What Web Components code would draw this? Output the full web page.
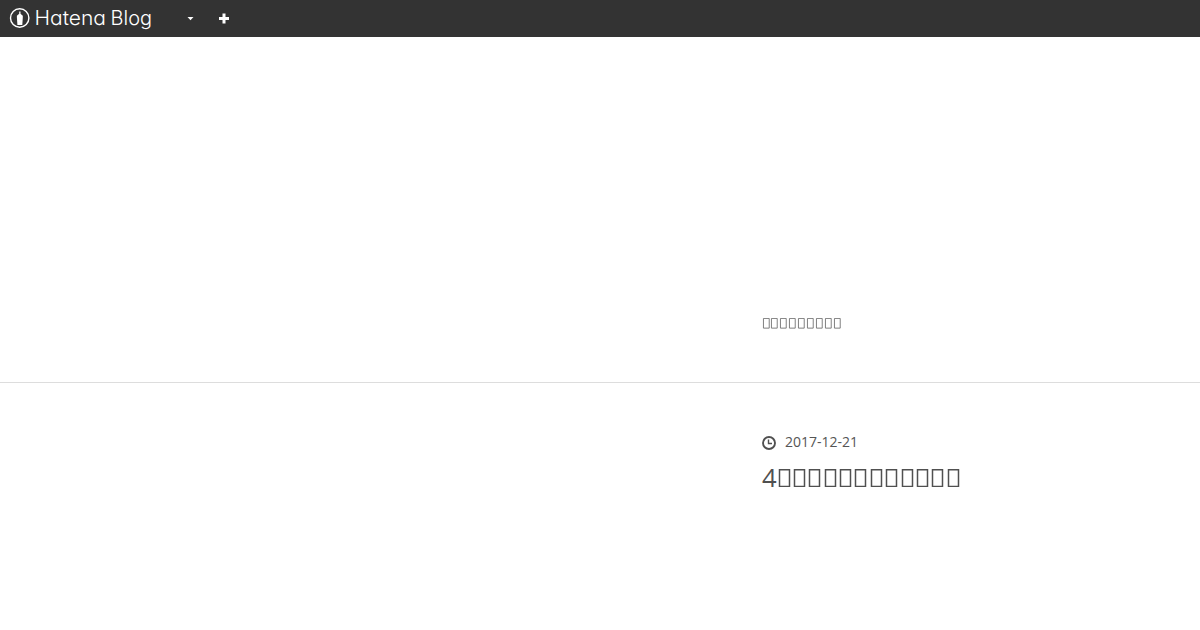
<!DOCTYPE html>
<html lang="ja">
<head>
<meta charset="utf-8">
<title>Hatena Blog</title>
<style>
  body {
    margin: 0;
    background: #fff;
    color: #454545;
    font-family: "Open Sans", "Noto Sans", sans-serif;
  }
</style>
</head>
<body>
<global-header></global-header>
<blog-header><box-glyphs count="9"></box-glyphs></blog-header>
<blog-entry date="2017-12-21">4<box-glyphs count="12"></box-glyphs></blog-entry>

<script>
// A run of empty glyph boxes, sized in em like the text around it
class BoxGlyphs extends HTMLElement {
    constructor() {
        super();
        this.attachShadow({ mode: "open" });
    }

    connectedCallback() {
        const count = Number(this.getAttribute("count")) || 1;
        const box = `<svg viewBox="0 0 1229 1462"><path d="M200 60h800v1342H200z"/></svg>`;
        this.shadowRoot.innerHTML = `
        <style>
          :host { display: inline-flex; vertical-align: baseline; }
          svg {
            display: block;
            width: 0.6001em;
            height: 0.7139em;
            fill: none;
            stroke: currentColor;
            stroke-width: 120;
          }
        </style>
        ${box.repeat(count)}
      `;
    }
}

class HatenaLogo extends HTMLElement {
    constructor() {
        super();
        this.attachShadow({ mode: "open" });
        this.shadowRoot.innerHTML = `
        <style>
          :host { display: block; height: 36px; }
          svg { display: block; }
          text {
            font-family: Inter, Lato, sans-serif;
            font-size: 20px;
            font-weight: 300;
            font-feature-settings: "cv11";
          }
        </style>
        <svg width="154" height="36" viewBox="0 0 154 36" fill="#fff">
          <circle cx="19.7" cy="18" r="9.2" fill="none" stroke="#fff" stroke-width="1.4"/>
          <path d="M19.2 11.500h1.300v2.300l2.300 2v1.600l-.5 7.700h-4.900l-.5-7.700v-1.600l2.300-2z"/>
          <text x="34.5" y="25" textLength="71.5" lengthAdjust="spacingAndGlyphs">Hatena</text>
          <text x="110.5" y="25" textLength="41.5" lengthAdjust="spacingAndGlyphs">Blog</text>
        </svg>
      `;
    }
}

class GlobalHeader extends HTMLElement {
    constructor() {
        super();
        this.attachShadow({ mode: "open" });
        this.shadowRoot.innerHTML = `
        <style>
          :host {
            display: flex;
            align-items: center;
            box-sizing: border-box;
            height: 37px;
            background: #333;
          }
          hatena-logo { margin-bottom: 1px; }
          .caret { margin-left: 33px; }
          .plus { margin-left: 25px; }
          svg { display: block; }
        </style>
        <hatena-logo></hatena-logo>
        <svg class="caret" width="7" height="5" viewBox="0 0 7 5"><path d="M.5 1h6l-3 3.200z" fill="#fff"/></svg>
        <svg class="plus" width="10" height="11" viewBox="0 0 10 11"><path d="M3.500 .5h3V4H10v3H6.500v3.500h-3V7H0V4h3.500z" fill="#fff"/></svg>
      `;
    }
}

class BlogHeader extends HTMLElement {
    constructor() {
        super();
        this.attachShadow({ mode: "open" });
        this.shadowRoot.innerHTML = `
        <style>
          :host {
            display: block;
            box-sizing: border-box;
            height: 346px;
            padding: 275px 0 0 761.6px;
            border-bottom: 1px solid #ddd;
          }
          h2 {
            margin: 0;
            font-size: 14.8px;
            font-weight: 400;
            line-height: 22px;
            color: #6c6c6c;
          }
        </style>
        <h2><slot></slot></h2>
      `;
    }
}

class BlogEntry extends HTMLElement {
    constructor() {
        super();
        this.attachShadow({ mode: "open" });
        this.shadowRoot.innerHTML = `
        <style>
          :host {
            display: block;
            padding: 48px 0 0 762px;
          }
          .date {
            display: flex;
            align-items: center;
            gap: 9px;
            font-size: 14px;
            line-height: 22px;
            color: #555;
          }
          svg { display: block; margin-top: 2px; }
          h1 {
            margin: 6px 0 0;
            font-size: 25.6px;
            font-weight: 400;
            line-height: 38px;
            color: #505050;
          }
        </style>
        <div class="date">
          <svg width="14" height="14" viewBox="0 0 14 14" fill="none" stroke="#505050">
            <circle cx="7" cy="7" r="6" stroke-width="1.900"/>
            <path d="M6.500 3.500v4H10" stroke-width="1.400"/>
          </svg>
          <time></time>
        </div>
        <h1><slot></slot></h1>
      `;
    }

    connectedCallback() {
        this.shadowRoot.querySelector("time").textContent = this.getAttribute("date");
    }
}

customElements.define("box-glyphs", BoxGlyphs);
customElements.define("hatena-logo", HatenaLogo);
customElements.define("global-header", GlobalHeader);
customElements.define("blog-header", BlogHeader);
customElements.define("blog-entry", BlogEntry);
</script>
</body>
</html>
